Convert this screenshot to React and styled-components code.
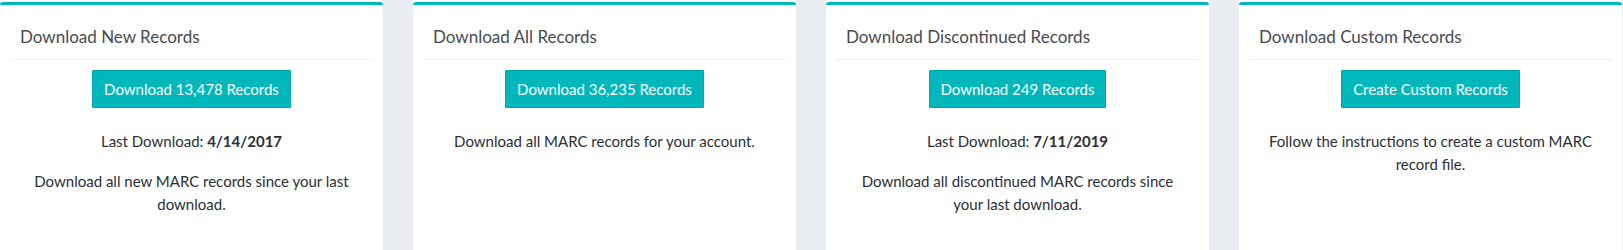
import React from 'react';
import styled, { createGlobalStyle } from 'styled-components';

const GlobalStyle = createGlobalStyle`
    * {
        box-sizing: border-box;
    }
    body {
        margin: 0;
        background-color: #e9edf2;
        font-family: Lato, "Liberation Sans", sans-serif;
        color: #2b2f36;
    }
`;

const cards = [
    {
        title: 'Download New Records',
        button: 'Download 13,478 Records',
        lastDownload: '4/14/2017',
        text: 'Download all new MARC records since your last download.',
    },
    {
        title: 'Download All Records',
        button: 'Download 36,235 Records',
        text: 'Download all MARC records for your account.',
    },
    {
        title: 'Download Discontinued Records',
        button: 'Download 249 Records',
        lastDownload: '7/11/2019',
        text: 'Download all discontinued MARC records since your last download.',
    },
    {
        title: 'Download Custom Records',
        button: 'Create Custom Records',
        text: 'Follow the instructions to create a custom MARC record file.',
    },
];

const App = () => {
    return (
        <>
            <GlobalStyle />
            <Grid>
                {cards.map((card) => (
                    <Card key={card.title}>
                        <Panel>
                            <Header>{card.title}</Header>
                            <Body>
                                <Button type="button">{card.button}</Button>
                                {card.lastDownload && (
                                    <Text>
                                        Last Download: <strong>{card.lastDownload}</strong>
                                    </Text>
                                )}
                                <Text>{card.text}</Text>
                            </Body>
                        </Panel>
                    </Card>
                ))}
            </Grid>
        </>
    );
};

export default App;

const Grid = styled.div`
    display: grid;
    grid-template-columns: repeat(4, 383px);
    column-gap: 30px;
    min-height: 250px;
`;

const Card = styled.div`
    background-color: #fff;
    padding-top: 2px;
    min-height: 250px;
`;

const Panel = styled.div`
    border-top: 3px solid #00b8bc;
    border-radius: 3px 3px 0 0;
`;

const Header = styled.h3`
    margin: 0 10px;
    padding: 20px 10px 10px;
    font-size: 17px;
    font-weight: 400;
    line-height: 24px;
    color: #474b52;
    border-bottom: 1px solid #eef0f2;
`;

const Body = styled.div`
    display: flex;
    flex-direction: column;
    align-items: center;
    padding: 10px 30px 0;
    text-align: center;
`;

const Button = styled.button`
    height: 38px;
    padding: 0 11px;
    font-family: inherit;
    font-size: 15px;
    color: #fff;
    background-color: #00b8bc;
    border: 1px solid #00a8ab;
    border-radius: 1px;
    cursor: pointer;
    margin-bottom: 22px;
`;

const Text = styled.p`
    margin: 0 0 17px;
    font-size: 15px;
    line-height: 23px;

    strong {
        font-weight: 700;
    }
`;
